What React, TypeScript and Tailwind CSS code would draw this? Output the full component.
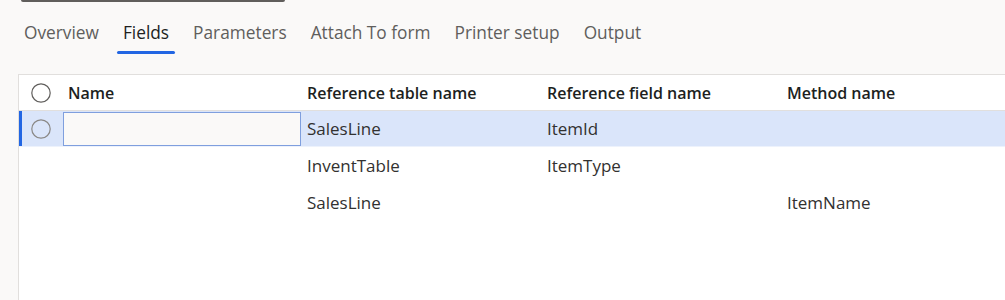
import React from "react";

const font = { fontFamily: '"Open Sans", "Segoe UI", sans-serif' };

function Circle({ light }: { light?: boolean }) {
  return (
    <svg width="20" height="20" viewBox="0 0 20 20">
      <circle cx="10" cy="10" r="9.2" fill="none" stroke={light ? "#8a8886" : "#605e5c"} strokeWidth="1.2" />
    </svg>
  );
}

const tabs = ["Overview", "Fields", "Parameters", "Attach To form", "Printer setup", "Output"];

const rows = [
  { t: "InventTable", f: "ItemType", m: "" },
  { t: "SalesLine", f: "", m: "ItemName" },
];

export default function App() {
  return (
    <div className="w-[1005px] h-[300px] bg-[#faf9f8] overflow-hidden flex flex-col" style={font}>
      <div className="ml-[21px] w-[264px] h-[2px] bg-[#605e5c] rounded-b-sm" />
      <div className="flex pl-[24px] gap-[24px] pt-[19px] h-[72px]">
        {tabs.map((t) => (
          <div key={t} className="flex flex-col">
            <div className={`text-[17.3px] leading-[24px] ${t === "Fields" ? "text-[#201f1e]" : "text-[#605e5c]"}`}>
              {t}
            </div>
            <div className={`mt-[6px] -mx-[6px] h-[3px] rounded-full ${t === "Fields" ? "bg-[#2266e3]" : ""}`} />
          </div>
        ))}
      </div>
      <div className="ml-[18px] flex-1 bg-white border-l border-t border-[#e1dfdd] flex flex-col text-[17px] text-[#323130]">
        <div className="flex items-center h-[36px] border-b border-[#e1dfdd] font-semibold text-[16px] text-[#201f1e]">
          <div className="w-[44px] flex justify-center pr-[1px]"><Circle /></div>
          <div className="w-[238px] pl-[5px]">Name</div>
          <div className="w-[240px] pl-[6px]">Reference table name</div>
          <div className="w-[240px] pl-[6px]">Reference field name</div>
          <div className="pl-[6px]">Method name</div>
        </div>
        <div className="flex items-center h-[36px] bg-[#dae5fa] border-b border-[#edf2fc]">
          <div className="w-[44px] h-full flex items-center">
            <div className="w-[3px] h-full bg-[#2266e3]" />
            <div className="flex-1 flex justify-center pr-[4px]"><Circle light /></div>
          </div>
          <div className="w-[238px] h-[34px] border border-[#7f9fde] bg-[#faf9f8]" />
          <div className="w-[240px] pl-[6px]">SalesLine</div>
          <div className="w-[240px] pl-[6px]">ItemId</div>
          <div className="pl-[6px]"></div>
        </div>
        {rows.map((r, i) => (
          <div key={i} className="flex items-center h-[37px]">
            <div className="w-[44px]" />
            <div className="w-[238px]" />
            <div className="w-[240px] pl-[6px]">{r.t}</div>
            <div className="w-[240px] pl-[6px]">{r.f}</div>
            <div className="pl-[6px]">{r.m}</div>
          </div>
        ))}
      </div>
    </div>
  );
}
